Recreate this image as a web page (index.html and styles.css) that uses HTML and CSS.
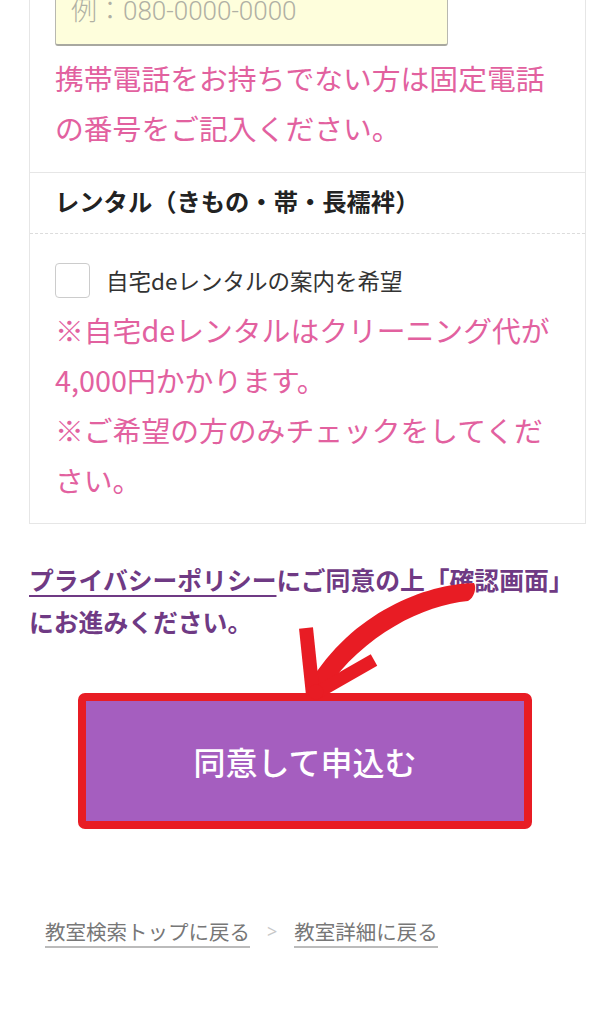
FILE: index.html
```html
<!DOCTYPE html>
<html lang="ja">
<head>
<meta charset="utf-8">
<title>申込フォーム</title>
<link rel="stylesheet" href="styles.css">
</head>
<body>
<div class="page">
  <div class="card">
    <div class="field">
      <input class="tel-input" type="tel" placeholder="例：080-0000-0000">
      <p class="note">携帯電話をお持ちでない方は固定電話の番号をご記入ください。</p>
    </div>
    <div class="row-head">レンタル（きもの・帯・長襦袢）</div>
    <div class="row-body">
      <label class="check-row">
        <span class="checkbox"></span>
        <span class="check-label">自宅deレンタルの案内を希望</span>
      </label>
      <p class="note">※自宅deレンタルはクリーニング代が4,000円かかります。<br>※ご希望の方のみチェックをしてください。</p>
    </div>
  </div>

  <div class="cta">
    <p class="privacy"><a class="privacy-link" href="#">プライバシーポリシー</a>にご同意の上「確認画面」にお進みください。</p>
    <button class="submit" type="button">同意して申込む</button>
    <svg class="arrow" width="614" height="300" viewBox="0 0 614 300" aria-hidden="true">
      <path d="M 474 25 C 426 26, 352 54, 309 126 L 325 133 C 364 76, 424 47, 468 43 C 474 40, 477 30, 474 25 Z" fill="#e81c24"/>
      <path d="M 306 70 L 313 137" fill="none" stroke="#e81c24" stroke-width="14" stroke-linecap="butt"/>
      <path d="M 374 102 L 318 134" fill="none" stroke="#e81c24" stroke-width="13" stroke-linecap="butt"/>
      <circle cx="316" cy="134" r="7.5" fill="#e81c24"/>
    </svg>
  </div>

  <div class="footer">
    <a class="back-link" href="#">教室検索トップに戻る</a>
    <span class="sep">&gt;</span>
    <a class="back-link" href="#">教室詳細に戻る</a>
  </div>
</div>
</body>
</html>
```

FILE: styles.css
```css
html, body {
  margin: 0;
  padding: 0;
  background: #ffffff;
}

body {
  font-family: "Noto Sans CJK JP", "Noto Sans", sans-serif;
  color: #333333;
  overflow: hidden;
}

.page {
  padding: 0 28px 0 29px;
}

.card {
  margin-top: -40px;
  border: 1px solid #e6e6e6;
  border-top: none;
}

.field {
  padding: 16px 25px 19px;
}

.tel-input {
  display: block;
  box-sizing: border-box;
  width: 393px;
  height: 70px;
  margin: 0;
  padding: 0 0 0 15px;
  background: #fefedc;
  border: 1px solid #b8b8b0;
  border-bottom: 2px solid #a8a8a0;
  border-radius: 3px;
  font-family: Roboto, "Noto Sans CJK JP", sans-serif;
  font-weight: 300;
  font-size: 26px;
  color: #333;
}

.tel-input::placeholder {
  color: #b0b0a4;
}

.note {
  margin: 7px 0 0;
  font-size: 28.8px;
  line-height: 50px;
  color: #e2619f;
}

.row-head {
  border-top: 1px solid #e6e6e6;
  border-bottom: 1px dashed #dcdcdc;
  padding: 12px 25px 16px;
  font-size: 24.3px;
  line-height: 32px;
  font-weight: bold;
  color: #222222;
}

.row-body {
  padding: 29px 25px 18px;
}

.check-row {
  display: flex;
  align-items: center;
  gap: 16px;
}

.checkbox {
  box-sizing: border-box;
  width: 35px;
  height: 35px;
  border: 1px solid #cccccc;
  border-radius: 4px;
  background: #fff;
  flex-shrink: 0;
}

.check-label {
  font-size: 22.5px;
  line-height: 35px;
  color: #333333;
}

.cta {
  position: relative;
  margin-top: 34px;
}

.privacy {
  margin: 0;
  font-size: 24.8px;
  line-height: 42px;
  font-weight: bold;
  color: #6f3a84;
}

.privacy-link {
  color: #6f3a84;
  text-decoration: underline;
  text-decoration-thickness: 2px;
  text-underline-offset: 5px;
}

.submit {
  display: flex;
  align-items: center;
  justify-content: center;
  box-sizing: border-box;
  width: 454px;
  height: 136px;
  margin: 51px 0 0 49px;
  padding: 0;
  background: #a55ebf;
  border: 8px solid #e81c24;
  border-radius: 7px;
  color: #ffffff;
  font-family: "Noto Sans CJK JP", sans-serif;
  font-size: 32px;
  font-weight: 500;
}

.arrow {
  position: absolute;
  left: -29px;
  top: 0;
  overflow: visible;
  pointer-events: none;
}

.footer {
  display: flex;
  align-items: flex-start;
  gap: 17px;
  margin-top: 87px;
  padding-left: 16px;
}

.back-link {
  font-size: 20.5px;
  line-height: 30px;
  color: #777777;
  text-decoration: none;
  border-bottom: 2px solid #bbbbbb;
}

.sep {
  font-family: "Noto Sans", sans-serif;
  font-size: 18px;
  line-height: 30px;
  color: #c8c8c8;
}
```
